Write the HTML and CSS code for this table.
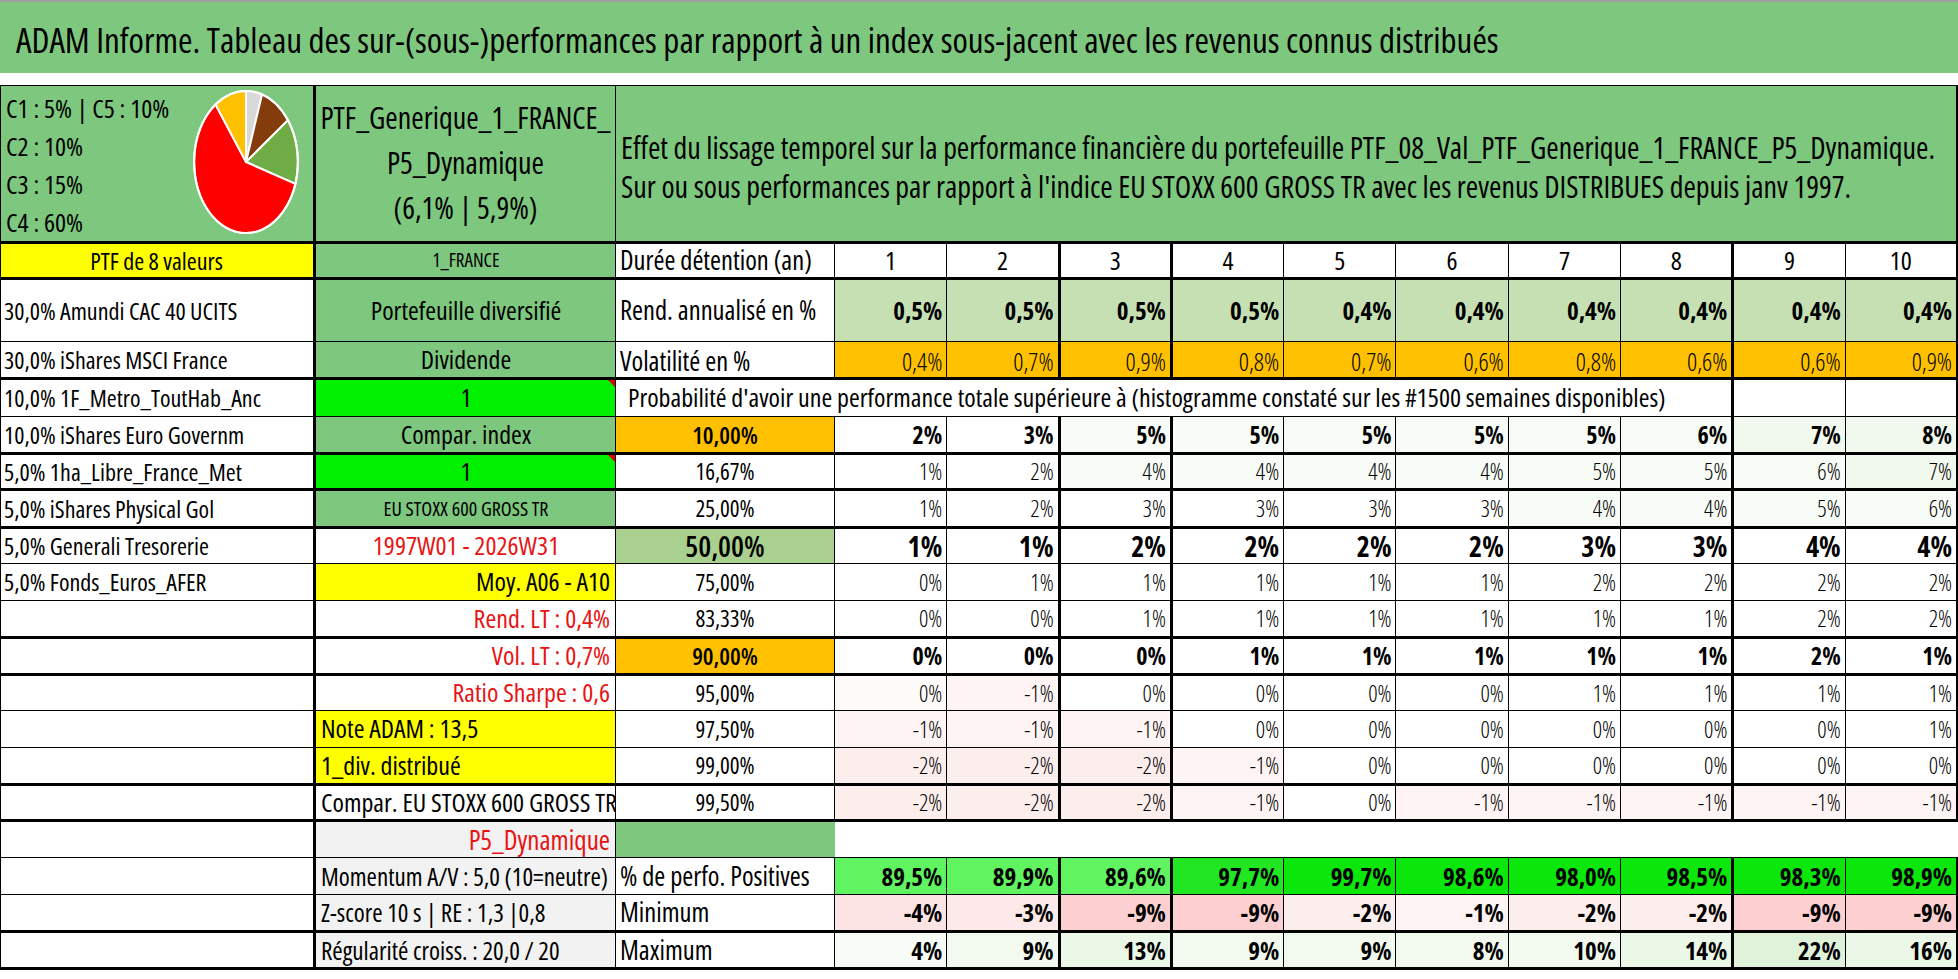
FILE: index.html
```html
<!DOCTYPE html>
<html lang="fr">
<head>
<meta charset="utf-8">
<title>ADAM Informe</title>
<link rel="stylesheet" href="styles.css">
</head>
<body>
<div class="page">
  <header class="title">ADAM Informe. Tableau des sur-(sous-)performances par rapport à un index sous-jacent avec les revenus connus distribués</header>
  <div class="strip"></div>
  <table class="sheet">
    <colgroup>
      <col class="ca tk"><col class="cb"><col class="cc">
      <col class="cn"><col class="cn tk"><col class="cn tk"><col class="cn"><col class="cn"><col class="cn"><col class="cn"><col class="cn tk"><col class="cn"><col class="cn tk">
    </colgroup>
    <tr class="hh tb">
      <td class="grn hA">
        <div class="alloc">
          <div class="legend">
            <div>C1 : 5% | C5 : 10%</div>
            <div>C2 : 10%</div>
            <div>C3 : 15%</div>
            <div>C4 : 60%</div>
          </div>
          <svg class="pie" viewBox="0 0 100 100" preserveAspectRatio="none">
            <path d="M50 50 L50 2 A48 48 0 0 1 64.83 4.35 Z" fill="#d9d9d9"/>
            <path d="M50 50 L64.83 4.35 A48 48 0 0 1 88.83 21.79 Z" fill="#843c0c"/>
            <path d="M50 50 L88.83 21.79 A48 48 0 0 1 95.65 64.83 Z" fill="#70ad47"/>
            <path d="M50 50 L95.65 64.83 A48 48 0 1 1 21.79 11.17 Z" fill="#ff0000"/>
            <path d="M50 50 L21.79 11.17 A48 48 0 0 1 50 2 Z" fill="#ffc000"/>
            <circle cx="50" cy="50" r="48" fill="none"/>
          </svg>
        </div>
      </td>
      <td class="grn hB">PTF_Generique_1_FRANCE_<br>P5_Dynamique<br>(6,1% | 5,9%)</td>
      <td class="grn hC" colspan="11">Effet du lissage temporel sur la performance financière du portefeuille PTF_08_Val_PTF_Generique_1_FRANCE_P5_Dynamique.<br>Sur ou sous performances par rapport à l'indice EU STOXX 600 GROSS TR avec les revenus DISTRIBUES depuis janv 1997.</td>
    </tr>
    <tr class="h36 tb">
      <td class="a yel ctr big">PTF de 8 valeurs</td>
      <td class="b grn ctr s19">1_FRANCE</td>
      <td class="c">Durée détention (an)</td>
      <td class="k">1</td><td class="k">2</td><td class="k">3</td><td class="k">4</td><td class="k">5</td><td class="k">6</td><td class="k">7</td><td class="k">8</td><td class="k">9</td><td class="k">10</td>
    </tr>
    <tr class="h63 rend">
      <td class="a">30,0% Amundi CAC 40 UCITS</td>
      <td class="b grn ctr">Portefeuille diversifié</td>
      <td class="c">Rend. annualisé en %</td>
      <td class="n">0,5%</td><td class="n">0,5%</td><td class="n">0,5%</td><td class="n">0,5%</td><td class="n">0,4%</td><td class="n">0,4%</td><td class="n">0,4%</td><td class="n">0,4%</td><td class="n">0,4%</td><td class="n">0,4%</td>
    </tr>
    <tr class="h37 tb vol">
      <td class="a">30,0% iShares MSCI France</td>
      <td class="b grn ctr">Dividende</td>
      <td class="c">Volatilité en %</td>
      <td class="n">0,4%</td><td class="n">0,7%</td><td class="n">0,9%</td><td class="n">0,8%</td><td class="n">0,7%</td><td class="n">0,6%</td><td class="n">0,8%</td><td class="n">0,6%</td><td class="n">0,6%</td><td class="n">0,9%</td>
    </tr>
    <tr class="h38">
      <td class="a">10,0% 1F_Metro_ToutHab_Anc</td>
      <td class="b lime ctr note">1</td>
      <td class="prob" colspan="9">Probabilité d'avoir une performance totale supérieure à (histogramme constaté sur les #1500 semaines disponibles)</td>
      <td></td><td></td>
    </tr>
    <tr class="h37 tb pb">
      <td class="a">10,0% iShares Euro Governm</td>
      <td class="b grn ctr">Compar. index</td>
      <td class="c ctr org">10,00%</td>
      <td class="n">2%</td><td class="n">3%</td><td class="n t1">5%</td><td class="n t1">5%</td><td class="n t1">5%</td><td class="n t1">5%</td><td class="n t1">5%</td><td class="n t1">6%</td><td class="n t2">7%</td><td class="n t2">8%</td>
    </tr>
    <tr class="h36 tb pl">
      <td class="a">5,0% 1ha_Libre_France_Met</td>
      <td class="b lime ctr note">1</td>
      <td class="c ctr">16,67%</td>
      <td class="n">1%</td><td class="n">2%</td><td class="n t1">4%</td><td class="n t1">4%</td><td class="n t1">4%</td><td class="n t1">4%</td><td class="n t1">5%</td><td class="n t1">5%</td><td class="n t1">6%</td><td class="n t2">7%</td>
    </tr>
    <tr class="h38 tb pl">
      <td class="a">5,0% iShares Physical Gol</td>
      <td class="b grn ctr s20">EU STOXX 600 GROSS TR</td>
      <td class="c ctr">25,00%</td>
      <td class="n">1%</td><td class="n">2%</td><td class="n">3%</td><td class="n">3%</td><td class="n">3%</td><td class="n">3%</td><td class="n t1">4%</td><td class="n t1">4%</td><td class="n t1">5%</td><td class="n t1">6%</td>
    </tr>
    <tr class="h36 pg">
      <td class="a">5,0% Generali Tresorerie</td>
      <td class="b red ctr">1997W01 - 2026W31</td>
      <td class="c ctr mid">50,00%</td>
      <td class="n">1%</td><td class="n">1%</td><td class="n">2%</td><td class="n">2%</td><td class="n">2%</td><td class="n">2%</td><td class="n">3%</td><td class="n">3%</td><td class="n">4%</td><td class="n">4%</td>
    </tr>
    <tr class="h37 pl">
      <td class="a">5,0% Fonds_Euros_AFER</td>
      <td class="b yel rt">Moy. A06 - A10</td>
      <td class="c ctr">75,00%</td>
      <td class="n">0%</td><td class="n">1%</td><td class="n">1%</td><td class="n">1%</td><td class="n">1%</td><td class="n">1%</td><td class="n">2%</td><td class="n">2%</td><td class="n">2%</td><td class="n">2%</td>
    </tr>
    <tr class="h37 tb pl">
      <td class="a"></td>
      <td class="b red rt">Rend. LT : 0,4%</td>
      <td class="c ctr">83,33%</td>
      <td class="n">0%</td><td class="n">0%</td><td class="n">1%</td><td class="n">1%</td><td class="n">1%</td><td class="n">1%</td><td class="n">1%</td><td class="n">1%</td><td class="n">2%</td><td class="n">2%</td>
    </tr>
    <tr class="h37 tb pb">
      <td class="a"></td>
      <td class="b red rt">Vol. LT : 0,7%</td>
      <td class="c ctr org">90,00%</td>
      <td class="n">0%</td><td class="n">0%</td><td class="n">0%</td><td class="n">1%</td><td class="n">1%</td><td class="n">1%</td><td class="n">1%</td><td class="n">1%</td><td class="n">2%</td><td class="n">1%</td>
    </tr>
    <tr class="h36 pl">
      <td class="a"></td>
      <td class="b red rt">Ratio Sharpe : 0,6</td>
      <td class="c ctr">95,00%</td>
      <td class="n m0">0%</td><td class="n m1">-1%</td><td class="n">0%</td><td class="n">0%</td><td class="n">0%</td><td class="n">0%</td><td class="n">1%</td><td class="n">1%</td><td class="n">1%</td><td class="n">1%</td>
    </tr>
    <tr class="h37 pl">
      <td class="a"></td>
      <td class="b yel">Note ADAM : 13,5</td>
      <td class="c ctr">97,50%</td>
      <td class="n m1">-1%</td><td class="n m1">-1%</td><td class="n m1">-1%</td><td class="n">0%</td><td class="n">0%</td><td class="n">0%</td><td class="n">0%</td><td class="n">0%</td><td class="n">0%</td><td class="n">1%</td>
    </tr>
    <tr class="h37 tb pl">
      <td class="a"></td>
      <td class="b yel">1_div. distribué</td>
      <td class="c ctr">99,00%</td>
      <td class="n m2">-2%</td><td class="n m2">-2%</td><td class="n m2">-2%</td><td class="n m1">-1%</td><td class="n">0%</td><td class="n">0%</td><td class="n">0%</td><td class="n">0%</td><td class="n">0%</td><td class="n">0%</td>
    </tr>
    <tr class="h36 tb pl">
      <td class="a"></td>
      <td class="b">Compar. EU STOXX 600 GROSS TR</td>
      <td class="c ctr">99,50%</td>
      <td class="n m2">-2%</td><td class="n m2">-2%</td><td class="n m2">-2%</td><td class="n m1">-1%</td><td class="n">0%</td><td class="n m1">-1%</td><td class="n m1">-1%</td><td class="n m1">-1%</td><td class="n m1">-1%</td><td class="n m1">-1%</td>
    </tr>
    <tr class="h37">
      <td class="a"></td>
      <td class="b gry red rt p5">P5_Dynamique</td>
      <td class="c grn"></td>
      <td class="void" colspan="10"></td>
    </tr>
    <tr class="h37 ps">
      <td class="a"></td>
      <td class="b gry sm">Momentum A/V : 5,0 (10=neutre)</td>
      <td class="c">% de perfo. Positives</td>
      <td class="n v1">89,5%</td><td class="n v1">89,9%</td><td class="n v1">89,6%</td><td class="n v2">97,7%</td><td class="n v3">99,7%</td><td class="n v3">98,6%</td><td class="n v3">98,0%</td><td class="n v3">98,5%</td><td class="n v3">98,3%</td><td class="n v3">98,9%</td>
    </tr>
    <tr class="h37 tb ps">
      <td class="a"></td>
      <td class="b gry sm">Z-score 10 s | RE : 1,3 |0,8</td>
      <td class="c">Minimum</td>
      <td class="n n4">-4%</td><td class="n n3">-3%</td><td class="n n9">-9%</td><td class="n n9">-9%</td><td class="n n2">-2%</td><td class="n n1">-1%</td><td class="n n2">-2%</td><td class="n n2">-2%</td><td class="n n9">-9%</td><td class="n n9">-9%</td>
    </tr>
    <tr class="h37 tb ps">
      <td class="a"></td>
      <td class="b gry sm">Régularité croiss. : 20,0 / 20</td>
      <td class="c">Maximum</td>
      <td class="n x1">4%</td><td class="n x2">9%</td><td class="n x3">13%</td><td class="n x2">9%</td><td class="n x2">9%</td><td class="n x2">8%</td><td class="n x2">10%</td><td class="n x3">14%</td><td class="n x4">22%</td><td class="n x3">16%</td>
    </tr>
  </table>
  <div class="foot"></div>
</div>
</body>
</html>
```
FILE: styles.css
```css
* { box-sizing: border-box; }
html, body { margin: 0; padding: 0; background: #fff; }
body {
  width: 1958px;
  height: 979px;
  overflow: hidden;
  font-family: "Open Sans", "DejaVu Sans Condensed", sans-serif;
  font-stretch: 75%;
  font-weight: 500;
  color: #000;
}

.title {
  height: 73px;
  border-top: 2px solid #a0a0a0;
  background: #7ec77e;
  font-size: 35px;
  line-height: 40px;
  display: flex;
  align-items: center;
  padding: 4px 0 0 16px;
  white-space: nowrap;
}
.strip { height: 12px; }

.sheet {
  border-collapse: collapse;
  table-layout: fixed;
  width: 1957px;
  border: 1px solid #000;
}
.sheet td {
  border: 1px solid #000;
  padding: 0 4px;
  overflow: hidden;
  white-space: nowrap;
  vertical-align: middle;
  font-size: 26px;
  line-height: 1.15;
}
col.ca { width: 314px; }
col.cb { width: 301px; }
col.cc { width: 219px; }
col.cn { width: 112.3px; }
col.tk { border-right: 3px solid #000; }
tr.tb { border-bottom: 3px solid #000; }

tr.hh { height: 155px; }
tr.h36 { height: 36px; }
tr.h37 { height: 37px; }
tr.h38 { height: 38px; }
tr.h63 { height: 63px; }

/* header block */
.sheet td.hA { vertical-align: top; padding: 0; }
.alloc { display: flex; justify-content: space-between; }
.legend { padding: 3px 0 0 5px; font-size: 26px; line-height: 38px; }
.pie { width: 108px; height: 148px; margin: 2px 13px 0 0; }
.pie path, .pie circle { stroke: #fff; stroke-width: 2px; vector-effect: non-scaling-stroke; }
.sheet td.hB {
  vertical-align: top;
  text-align: center;
  padding: 9px 2px 0;
  font-size: 30px;
  line-height: 45px;
}
.sheet td.hC {
  vertical-align: top;
  padding: 42px 0 0 5px;
  font-size: 30px;
  line-height: 39px;
}

/* fills */
.grn { background: #7ec77e; }
.yel { background: #ffff00; }
.lime { background: #00f000; }
.org { background: #ffc000; }
.gry { background: #f2f2f2; }
.mid { background: #a9d08e; }

/* text cells */
.sheet td.a { font-size: 24px; padding-left: 3px; }
.sheet td.big { font-size: 24px; }
.sheet td.c { font-size: 26.5px; }
.sheet td.s19 { font-size: 19px; }
.sheet td.s20 { font-size: 20px; }
.sheet td.sm { font-size: 25px; padding-left: 5px; }
.sheet td.p5 { font-size: 27px; }
.sheet td.b { padding-left: 5px; }
.sheet td.red { color: #e81414; }
.ctr { text-align: center; }
.sheet td.rt { text-align: right; padding-right: 5px; }
.sheet td.k { text-align: center; font-size: 26px; }
.sheet td.prob { padding-left: 12px; font-size: 26px; }
.sheet td.void { border-left: hidden; border-right: hidden; }

.note { position: relative; }
.note::after {
  content: "";
  position: absolute;
  top: 0;
  right: 0;
  border-style: solid;
  border-width: 0 7px 7px 0;
  border-color: transparent #e00000 transparent transparent;
}

/* numbers */
.sheet td.n { text-align: right; padding-right: 4px; }
.rend td.n { background: #c6e0b4; font-weight: 700; font-size: 25px; }
.vol td.n { background: #ffc000; font-size: 25px; font-weight: 300; vertical-align: bottom; padding-bottom: 1px; }
.sheet tr.vol td.c { vertical-align: bottom; padding-bottom: 1px; }
.pb td.n { font-weight: 700; font-size: 24px; }
.sheet tr.pb td.c { font-weight: 600; font-size: 24px; }
.pl td.n { font-size: 23px; font-weight: 300; }
.sheet tr.pl td.c { font-size: 23px; }
.pg td.n { font-weight: 700; font-size: 28px; }
.sheet tr.pg td.c { font-weight: 600; font-size: 29px; }
.ps td.n { font-weight: 700; font-size: 25px; }

.t1 { background: #f7fcf6; }
.t2 { background: #f1f9ee; }
.m0 { background: #fffafa; }
.m1 { background: #fef4f4; }
.m2 { background: #fdeeee; }

.v1 { background: #60f460; }
.v2 { background: #22e622; }
.v3 { background: #0be60b; }
.n1 { background: #fef3f3; }
.n2 { background: #fdeeee; }
.n3 { background: #fde9e9; }
.n4 { background: #fde4e4; }
.n9 { background: #fcd0d0; }
.x1 { background: #f7fcf6; }
.x2 { background: #f2faf0; }
.x3 { background: #ebf7e7; }
.x4 { background: #dff3da; }

.foot { height: 11px; border-bottom: 2px solid #b8b8b8; }
```
